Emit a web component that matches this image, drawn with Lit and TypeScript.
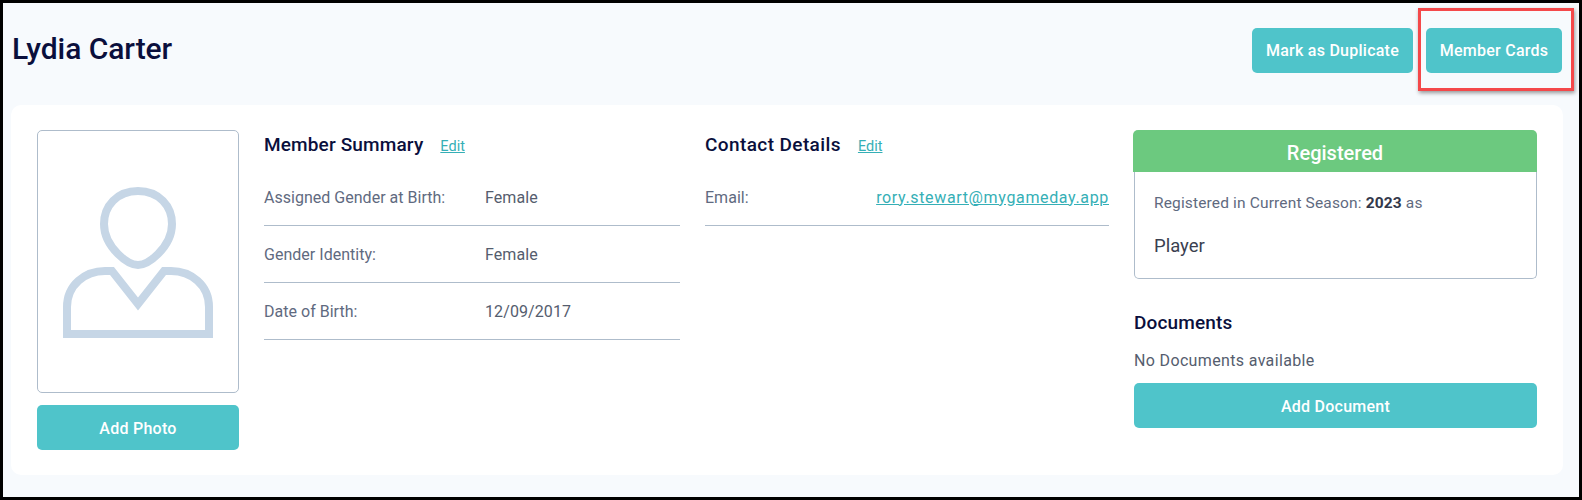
import { LitElement, html, css, svg } from "lit";
import { customElement } from "lit/decorators.js";

const avatar = svg`<svg class="avatar" width="160" height="160" viewBox="0 0 160 160" fill="none" stroke="#c6d6e6" stroke-width="8">
  <path d="M80 5C59 5 46 20 46 38C46 50 52 60 60 68C67 75 74 79 80 79C86 79 93 75 100 68C108 60 114 50 114 38C114 20 101 5 80 5Z"/>
  <path d="M9 148V121C9 99 27 85 47 85H54L80 118L106 85H113C133 85 151 99 151 121V148Z"/>
</svg>`;

@customElement("app-root")
export class AppRoot extends LitElement {
  static styles = css`
    :host { display: block; font-family: Roboto, "Liberation Sans", sans-serif; }
    * { box-sizing: border-box; }
    .page { position: relative; height: 500px; border: 3px solid #000; background: #f7fafd; padding: 0 16px 22px 8px; display: flex; flex-direction: column; }
    .head { height: 102px; display: flex; align-items: flex-start; justify-content: space-between; }
    h1 { margin: 27px 0 0 1px; font-size: 30px; line-height: 38px; font-weight: 500; color: #0a0f3c; letter-spacing: -.05px; }
    .actions { display: flex; gap: 13px; margin-top: 25px; margin-right: 1px; }
    .btn { display: flex; align-items: center; justify-content: center; height: 45px; border: 0; border-radius: 5px; background: #4fc4ca; color: #fff; font: 500 16px Roboto, sans-serif; letter-spacing: .25px; padding: 0; }
    .dup { width: 161px; }
    .cards { width: 136px; }
    .card { background: #fff; border-radius: 10px; height: 370px; padding: 25px 26px 0; display: grid; grid-template-columns: 202px 416px 404px 403px; column-gap: 25px; }
    .photo { height: 263px; border: 1px solid #aebccb; border-radius: 5px; display: flex; justify-content: center; padding-top: 55px; }
    .avatar { filter: blur(0.6px); }
    .wide { width: 100%; margin-top: 12px; padding-top: 2px; }
    .sec { display: flex; align-items: baseline; gap: 17px; height: 30px; }
    h2 { margin: 0; font-size: 19px; line-height: 30px; font-weight: 500; color: #0a0f3c; letter-spacing: .15px; }
    .wider h2 { letter-spacing: .4px; }
    a { color: #35afb6; text-decoration: underline; }
    .edit { font-size: 14.5px; font-weight: 400; }
    .rows { margin-top: 9px; }
    .row { display: grid; grid-template-columns: 221px 1fr; align-items: center; height: 57px; border-bottom: 1px solid #aebccb; font-size: 16px; letter-spacing: .02px; color: #5f6a80; }
    .row .val { color: #555d6e; letter-spacing: .1px; }
    .row.email { display: flex; justify-content: space-between; }
    .row.email a { letter-spacing: .65px; }
    .status-h { height: 42px; margin-left: -1px; padding-top: 3px; background: #6cc97f; color: #fff; font-size: 20px; font-weight: 500; display: flex; align-items: center; justify-content: center; border-radius: 5px 5px 0 0; }
    .status-b { height: 107px; border: 1px solid #aebccb; border-top: 0; border-radius: 0 0 5px 5px; padding: 22px 19px 0; font-size: 15.5px; letter-spacing: .15px; color: #5f6a80; }
    .status-b b { color: #33384a; font-weight: 700; }
    .role { font-size: 18.5px; letter-spacing: 0; color: #3a3f50; margin-top: 23px; }
    .docs { margin-top: 29px; }
    .docs p { margin: 11px 0 0; font-size: 16px; letter-spacing: .35px; line-height: 24px; color: #555d6e; }
    .docs .wide { margin-top: 10px; }
    .mark { position: absolute; left: 1415px; top: 5px; width: 156px; height: 83px; border: 3px solid #f4484a; box-shadow: 1px 2px 4px rgba(0,0,0,.4); pointer-events: none; }
  `;

  private row(label: string, val: string) {
    return html`<div class="row"><span>${label}</span><span class="val">${val}</span></div>`;
  }

  render() {
    return html`<div class="page">
      <div class="head">
        <h1>Lydia Carter</h1>
        <div class="actions">
          <button class="btn dup">Mark as Duplicate</button>
          <button class="btn cards">Member Cards</button>
        </div>
      </div>
      <div class="card">
        <div>
          <div class="photo">${avatar}</div>
          <button class="btn wide">Add Photo</button>
        </div>
        <div>
          <div class="sec"><h2>Member Summary</h2><a class="edit" href="#">Edit</a></div>
          <div class="rows">
            ${this.row("Assigned Gender at Birth:", "Female")}
            ${this.row("Gender Identity:", "Female")}
            ${this.row("Date of Birth:", "12/09/2017")}
          </div>
        </div>
        <div>
          <div class="sec wider"><h2>Contact Details</h2><a class="edit" href="#">Edit</a></div>
          <div class="rows">
            <div class="row email"><span>Email:</span><a href="#">rory.stewart@mygameday.app</a></div>
          </div>
        </div>
        <div>
          <div>
            <div class="status-h">Registered</div>
            <div class="status-b">
              <div>Registered in Current Season: <b>2023</b> as</div>
              <div class="role">Player</div>
            </div>
          </div>
          <div class="docs">
            <h2>Documents</h2>
            <p>No Documents available</p>
            <button class="btn wide">Add Document</button>
          </div>
        </div>
      </div>
      <div class="mark"></div>
    </div>`;
  }
}
